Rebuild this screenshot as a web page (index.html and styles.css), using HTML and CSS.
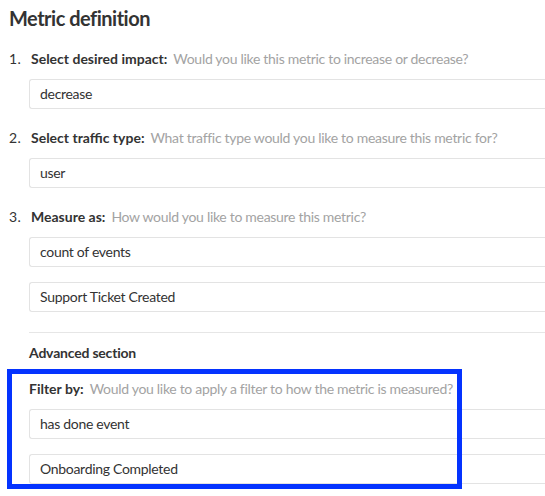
FILE: index.html
```html
<!DOCTYPE html>
<html lang="en">
<head>
<meta charset="utf-8">
<title>Metric definition</title>
<link rel="stylesheet" href="styles.css">
</head>
<body>
<div class="page">
  <h1 class="title">Metric definition</h1>
  <ol class="steps">
    <li class="step">
      <div class="step-label"><span class="num">1.</span><span class="strong">Select desired impact:</span><span class="hint">Would you like this metric to increase or decrease?</span></div>
      <div class="fields"><div class="field">decrease</div></div>
    </li>
    <li class="step">
      <div class="step-label"><span class="num">2.</span><span class="strong">Select traffic type:</span><span class="hint">What traffic type would you like to measure this metric for?</span></div>
      <div class="fields"><div class="field">user</div></div>
    </li>
    <li class="step">
      <div class="step-label"><span class="num">3.</span><span class="strong">Measure as:</span><span class="hint">How would you like to measure this metric?</span></div>
      <div class="fields"><div class="field">count of events</div><div class="field">Support Ticket Created</div></div>
    </li>
  </ol>
  <div class="advanced">
    <hr class="divider">
    <div class="section-title">Advanced section</div>
    <div class="filter">
      <div class="step-label"><span class="strong">Filter by:</span><span class="hint">Would you like to apply a filter to how the metric is measured?</span></div>
      <div class="fields"><div class="field">has done event</div><div class="field">Onboarding Completed</div></div>
      <div class="highlight"></div>
    </div>
  </div>
</div>
</body>
</html>
```
FILE: styles.css
```css
html, body {
  margin: 0;
  padding: 0;
  background: #ffffff;
  overflow: hidden;
}
body {
  font-family: "Lato", "Open Sans", sans-serif;
  color: #333333;
  width: 545px;
  height: 496px;
}
.page {
  padding: 6px 0 0 9px;
}
.title {
  margin: 0;
  font-size: 20px;
  line-height: 24px;
  font-weight: 700;
  letter-spacing: -0.5px;
  color: #333333;
}
.steps {
  list-style: none;
  margin: 19px 0 0 0;
  padding: 0;
}
.step {
  margin-bottom: 19px;
}
.step:last-child {
  margin-bottom: 0;
}
.step-label {
  display: flex;
  align-items: center;
  height: 20px;
  font-size: 14px;
  line-height: 20px;
  white-space: nowrap;
}
.num {
  width: 22px;
  flex: none;
  letter-spacing: 0.5px;
}
.strong {
  font-weight: 700;
  margin-right: 6px;
}
.hint {
  color: #a3a3a3;
  letter-spacing: -0.3px;
}
.fields {
  display: flex;
  flex-direction: column;
  gap: 15px;
  margin: 10px 0 0 20px;
}
.field {
  box-sizing: border-box;
  height: 30px;
  border: 1px solid #e3e3e3;
  border-right: 0;
  border-radius: 3px 0 0 3px;
  padding: 0 10px;
  font-size: 14px;
  line-height: 28px;
  letter-spacing: -0.3px;
  color: #333333;
}
.advanced {
  margin-left: 20px;
}
.divider {
  margin: 20px 0 0 0;
  border: 0;
  border-top: 1px solid #e6e6e6;
}
.section-title {
  margin-top: 10px;
  font-size: 14px;
  line-height: 20px;
  font-weight: 700;
  letter-spacing: -0.2px;
}
.filter {
  position: relative;
  margin-top: 16px;
}
.filter .fields {
  margin-left: 0;
}
.highlight {
  position: absolute;
  left: -22px;
  top: -10px;
  width: 455px;
  height: 120px;
  box-sizing: border-box;
  border: 5px solid #0433ff;
  pointer-events: none;
}
```
